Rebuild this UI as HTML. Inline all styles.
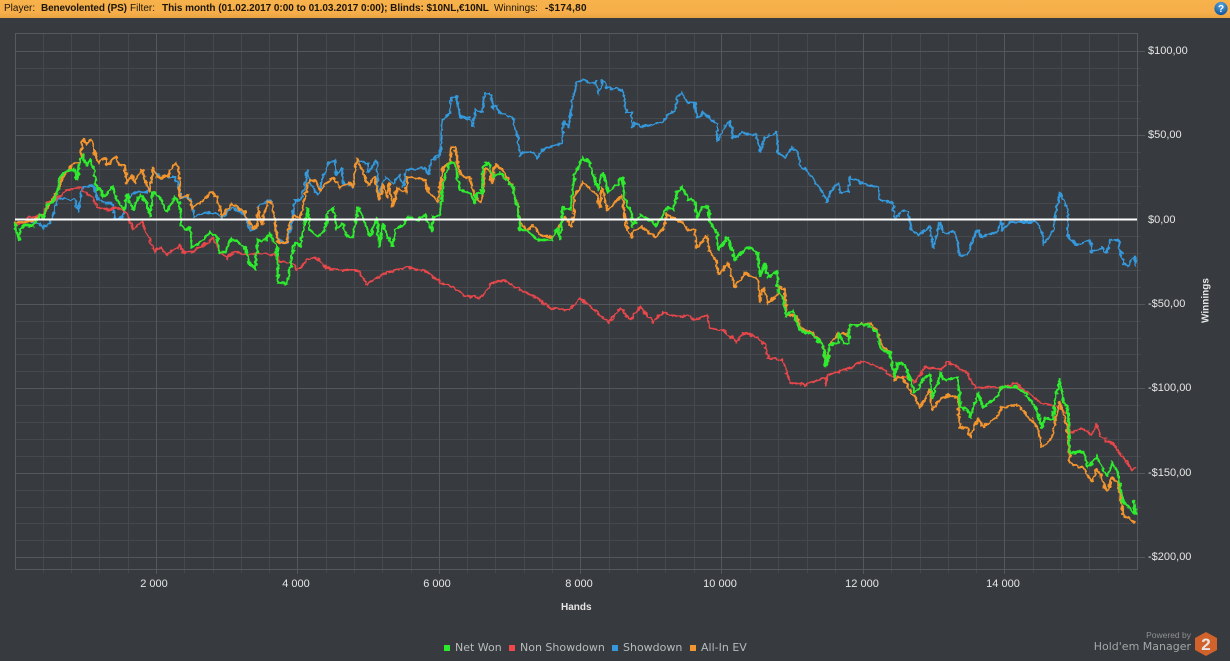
<!DOCTYPE html>
<html><head><meta charset="utf-8"><style>
html,body{margin:0;padding:0;width:1230px;height:661px;overflow:hidden;background:#373A3E;font-family:"Liberation Sans",sans-serif}
.t{position:absolute;white-space:nowrap}
#hd{position:absolute;left:0;top:0;width:1230px;height:18px;background:linear-gradient(#F7B24C,#F5AE49 70%,#E9A443)}
#hd span{position:absolute;top:2px;font-size:10px;line-height:13px;color:#1d1608;white-space:nowrap}
#hd b{font-weight:bold}
.y{position:absolute;left:1148px;font-size:11px;line-height:13px;color:#e6e6e6;white-space:nowrap}
.x{position:absolute;top:578px;width:60px;text-align:center;font-size:11px;line-height:13px;color:#e6e6e6}
.l{position:absolute;top:641px;font-family:"DejaVu Sans",sans-serif;font-size:11px;line-height:14px;color:#b8babb;white-space:nowrap}
.s{position:absolute;top:645px;width:6px;height:6px}
</style></head><body>
<div id="hd">
<span style="left:4px">Player:</span>
<span style="left:41px;letter-spacing:-.15px"><b>Benevolented (PS)</b></span>
<span style="left:130px">Filter:</span>
<span style="left:162px;letter-spacing:-.04px"><b>This month (01.02.2017 0:00 to 01.03.2017 0:00); Blinds: $10NL,€10NL</b></span>
<span style="left:494px">Winnings:</span>
<span style="left:545px;letter-spacing:.3px"><b>-$174,80</b></span>
</div>
<svg style="position:absolute;left:1213px;top:1px" width="16" height="16" viewBox="0 0 16 16"><defs><radialGradient id="g" cx=".5" cy=".25" r=".8"><stop offset="0" stop-color="#5BA8E0"/><stop offset="1" stop-color="#0B4F93"/></radialGradient></defs><circle cx="8" cy="7.5" r="6.6" fill="url(#g)"/><text x="8" y="11" font-family="Liberation Sans" font-size="10" font-weight="bold" fill="#fff" text-anchor="middle">?</text></svg>
<svg style="position:absolute;left:0;top:0" width="1230" height="661" viewBox="0 0 1230 661">
<defs><filter id="j" filterUnits="userSpaceOnUse" x="0" y="20" width="1160" height="560"><feTurbulence type="fractalNoise" baseFrequency="0.22" numOctaves="2" seed="4"/><feDisplacementMap in="SourceGraphic" scale="5" xChannelSelector="G" yChannelSelector="R"/></filter></defs>
<g fill="none" stroke-width="1" shape-rendering="crispEdges">
<path stroke="#45484C" d="M15 68.5H1141M15 85.5H1141M15 101.5H1141M15 118.5H1141M15 152.5H1141M15 169.5H1141M15 186.5H1141M15 203.5H1141M15 236.5H1141M15 253.5H1141M15 270.5H1141M15 287.5H1141M15 321.5H1141M15 338.5H1141M15 354.5H1141M15 371.5H1141M15 405.5H1141M15 422.5H1141M15 439.5H1141M15 456.5H1141M15 490.5H1141M15 507.5H1141M15 523.5H1141M15 540.5H1141"/>
<path stroke="#45484C" d="M43.5 33V573M71.5 33V573M99.5 33V573M128.5 33V573M184.5 33V573M213.5 33V573M241.5 33V573M269.5 33V573M326.5 33V573M354.5 33V573M382.5 33V573M411.5 33V573M467.5 33V573M495.5 33V573M524.5 33V573M552.5 33V573M609.5 33V573M637.5 33V573M665.5 33V573M694.5 33V573M750.5 33V573M778.5 33V573M807.5 33V573M835.5 33V573M891.5 33V573M920.5 33V573M948.5 33V573M976.5 33V573M1033.5 33V573M1061.5 33V573M1089.5 33V573M1118.5 33V573"/>
<path stroke="#54575B" d="M15 51.5H1145M15 135.5H1145M15 304.5H1145M15 388.5H1145M15 473.5H1145M15 557.5H1145"/>
<path stroke="#54575B" d="M156.5 33V574M297.5 33V574M439.5 33V574M580.5 33V574M721.5 33V574M863.5 33V574M1004.5 33V574"/>
<path stroke="#56595D" d="M15.5 33.5H1137.5V569.5H15.5Z"/>
</g>
<g fill="none" stroke-linejoin="miter" stroke-miterlimit="2" filter="url(#j)">
<polyline stroke="#3498DB" stroke-width="2" points="15,222 30,222 40,223 42,228 50,223 54,212 58,198 75,200 78,212 82,188 93,185 98,200 113,205 115,220 123,217 127,198 137,192 147,192 150,187 153,170 160,177 175,177 179,188 182,198 190,198 194,217 203,213 217,214 222,218 233,207 245,215 250,230 257,228 258,208 267,200 272,202 278,240 287,243 292,223 295,200 300,200 305,187 307,170 310,183 318,195 323,177 328,163 335,160 336,175 342,168 343,182 353,187 357,160 368,163 368,173 377,160 378,197 385,177 393,183 400,175 403,187 407,170 425,168 428,175 432,160 440,155 443,120 450,113 451,98 457,97 460,117 470,119 473,127 475,110 482,112 485,93 490,93 493,108 497,105 498,112 513,118 518,140 520,156 523,152 533,152 537,158 542,150 562,143 563,122 569,127 573,97 577,82 585,80 590,84 596,82 598,95 603,79 607,88 617,89 623,90 626,112 632,112 632,128 635,123 640,127 652,125 663,122 670,113 675,112 677,97 682,92 687,102 695,103 697,119 703,112 710,118 717,125 717,142 725,127 730,120 733,138 742,133 757,135 760,152 765,138 777,132 778,153 785,158 792,147 798,153 800,165 813,178 823,193 827,202 830,193 838,182 840,192 848,192 850,177 867,185 878,187 880,200 893,203 895,220 902,210 908,212 912,230 918,235 930,227 933,249 940,222 943,233 955,232 960,256 967,255 977,230 982,237 997,232 1002,218 1002,230 1010,222 1037,222 1042,233 1043,245 1053,232 1055,217 1060,192 1068,210 1068,237 1077,245 1090,240 1092,252 1102,248 1107,253 1110,240 1118,240 1123,262 1127,266 1135,256 1136,267"/>
<polyline stroke="#E5474C" stroke-width="2" points="15,225 22,223 28,218 43,215 48,202 55,200 67,190 80,188 93,198 97,207 110,210 115,207 127,213 133,230 142,222 148,237 155,252 160,247 167,255 180,245 183,253 192,252 207,243 213,238 220,252 227,258 233,252 250,255 260,253 277,255 280,262 290,262 298,270 308,260 315,257 327,268 337,270 350,270 358,270 367,285 378,277 388,272 397,270 408,267 427,272 440,282 455,288 463,295 480,298 492,283 503,280 520,290 537,298 550,308 570,310 580,298 600,315 608,323 620,308 630,320 640,307 653,322 663,313 680,317 688,315 695,320 707,315 710,328 723,330 737,342 743,333 757,337 765,345 768,358 783,360 786,368 790,383 805,385 826,377 826,386 828,375 850,368 863,361 880,367 893,377 908,377 915,382 925,367 940,370 948,362 967,373 975,388 993,387 1002,388 1015,383 1027,392 1040,402 1058,407 1068,413 1070,433 1083,428 1092,435 1097,423 1100,437 1112,443 1123,457 1132,470 1136,467"/>
<polyline stroke="#F2952F" stroke-width="2.2" points="15,222 30,222 45,213 50,203 58,190 64,175 70,168 75,163 80,162 83,138 87,145 91,138 95,155 99,163 105,158 108,165 115,157 120,165 125,167 127,183 132,175 134,183 142,169 147,188 150,192 153,167 157,177 167,177 175,163 179,168 180,197 188,196 192,208 200,203 212,192 217,198 222,217 232,203 245,213 252,228 257,227 258,208 262,225 267,202 272,203 278,242 287,242 290,223 295,215 300,218 305,197 308,183 315,180 320,190 333,178 340,188 348,182 353,187 357,158 363,172 368,185 375,177 379,200 383,185 387,197 389,183 393,207 397,188 406,192 407,177 425,180 428,192 438,202 443,168 450,163 451,147 455,147 460,175 470,178 475,197 482,202 485,168 490,172 492,185 495,165 503,170 513,187 518,208 520,223 527,230 533,225 540,235 552,237 560,225 565,217 572,227 575,195 583,182 597,195 600,208 602,187 608,210 622,195 625,217 627,228 632,238 633,230 642,227 655,237 663,230 667,215 683,223 688,230 695,230 697,248 707,235 710,253 717,262 718,275 728,263 735,287 745,273 758,280 760,302 763,287 768,303 777,295 780,287 785,290 786,315 797,317 800,328 813,333 823,345 827,363 830,345 838,333 848,335 850,325 872,324 878,333 882,345 890,353 895,380 902,377 910,390 920,407 930,390 932,410 940,400 948,395 958,398 960,427 968,428 970,437 978,418 983,427 997,417 1002,407 1017,405 1027,415 1037,427 1042,448 1052,438 1055,420 1060,402 1067,427 1070,463 1083,468 1092,482 1097,468 1107,492 1112,477 1118,483 1123,515 1135,523"/>
<polyline stroke="#2DEB2F" stroke-width="2.4" points="15,222 17,235 19,240 20,230 25,225 33,226 40,215 44,217 47,205 52,202 57,195 59,180 64,172 68,170 75,170 77,180 80,160 83,155 86,165 90,158 94,170 97,190 100,188 103,197 113,187 117,200 124,210 127,194 133,210 140,195 147,202 150,217 153,192 160,198 167,212 175,197 180,203 181,223 185,230 190,228 192,247 200,243 210,232 217,237 220,252 225,252 232,238 245,248 250,265 255,268 258,240 267,240 269,232 277,247 278,283 287,284 292,257 295,242 300,247 303,230 308,208 310,230 318,237 325,230 328,212 333,208 337,230 342,223 347,237 353,237 358,207 365,223 370,237 377,217 379,248 383,223 388,237 393,247 395,230 405,223 408,217 417,220 425,215 432,232 433,217 440,215 443,183 450,163 455,163 460,190 470,193 475,203 477,193 482,193 483,167 488,162 493,177 500,173 513,187 518,210 520,230 527,230 538,240 552,240 557,227 560,240 563,207 570,210 575,173 583,158 590,163 598,190 600,180 603,172 608,192 617,185 622,177 626,203 632,212 632,227 640,215 650,220 655,225 662,217 668,207 674,210 677,192 682,187 688,198 695,202 697,217 703,207 708,207 710,223 717,233 718,250 728,237 735,260 747,247 758,253 760,277 765,263 768,277 777,272 778,293 783,297 786,317 792,310 800,330 813,335 823,345 826,367 830,345 838,343 839,332 843,343 848,343 850,325 867,325 877,332 880,348 890,353 895,378 897,363 905,365 910,380 915,393 923,380 930,373 932,398 941,372 943,380 958,378 960,407 968,410 970,418 978,393 983,407 997,397 1002,387 1017,387 1027,395 1037,410 1042,428 1045,418 1053,420 1055,402 1060,378 1063,400 1068,410 1070,453 1083,452 1088,467 1097,457 1107,477 1112,462 1118,473 1123,502 1128,507 1135,513 1134,500 1136,515"/>
</g>
<rect x="15" y="218.5" width="1122" height="2" fill="#fff" shape-rendering="crispEdges"/>
<polygon points="1206,632 1217,638 1217,650 1206,656 1195,650 1195,638" fill="#D2622B"/>
<text x="1206" y="650" font-family="Liberation Sans" font-size="17" font-weight="bold" fill="#e9e4df" text-anchor="middle">2</text>
</svg>
<div class="y" style="top:45px">$100,00</div>
<div class="y" style="top:129px">$50,00</div>
<div class="y" style="top:214px">$0,00</div>
<div class="y" style="top:298px">-$50,00</div>
<div class="y" style="top:382px">-$100,00</div>
<div class="y" style="top:467px">-$150,00</div>
<div class="y" style="top:551px">-$200,00</div>
<div class="x" style="left:124px">2 000</div>
<div class="x" style="left:266px">4 000</div>
<div class="x" style="left:407px">6 000</div>
<div class="x" style="left:549px">8 000</div>
<div class="x" style="left:690px">10 000</div>
<div class="x" style="left:832px">12 000</div>
<div class="x" style="left:973px">14 000</div>
<div class="t" style="left:561px;top:601px;font-size:10px;line-height:13px;font-weight:bold;color:#e6e6e6">Hands</div>
<div class="t" style="left:1182px;top:294px;width:48px;text-align:center;font-size:10px;line-height:13px;font-weight:bold;color:#e6e6e6;transform:rotate(-90deg)">Winnings</div>
<div class="s" style="left:444px;background:#2BEB2E"></div><div class="l" style="left:455px">Net Won</div>
<div class="s" style="left:509px;background:#F0484C"></div><div class="l" style="left:520px">Non Showdown</div>
<div class="s" style="left:612px;background:#3498DB"></div><div class="l" style="left:623px">Showdown</div>
<div class="s" style="left:690px;background:#F39530"></div><div class="l" style="left:701px">All-In EV</div>
<div class="t" style="right:39px;top:630px;font-size:8.5px;line-height:11px;color:#8f9192">Powered by</div>
<div class="t" style="right:39px;top:640px;font-family:'DejaVu Sans',sans-serif;font-size:11px;line-height:14px;color:#a4a6a7">Hold'em Manager</div>
</body></html>
